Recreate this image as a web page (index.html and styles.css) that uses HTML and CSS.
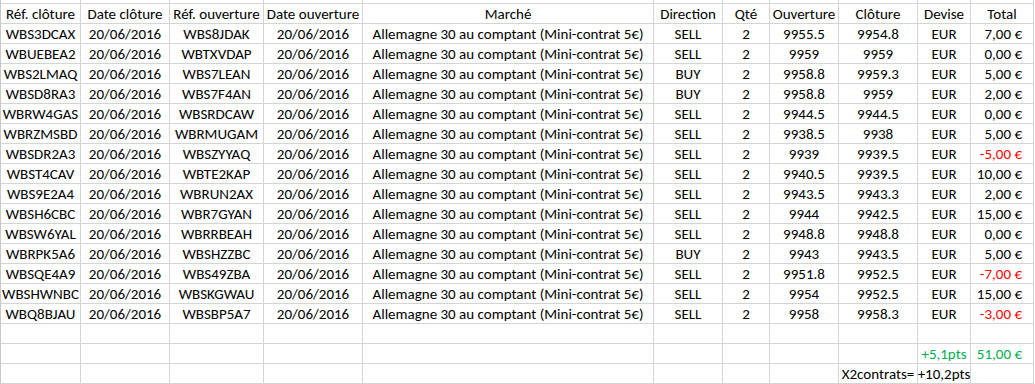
FILE: index.html
```html
<!DOCTYPE html>
<html lang="fr">
<head>
<meta charset="utf-8">
<title>Transactions</title>
<link rel="stylesheet" href="styles.css">
</head>
<body>
<div class="sheet">
  <div class="c"></div><div class="c"></div><div class="c"></div><div class="c"></div><div class="c"></div><div class="c"></div><div class="c"></div><div class="c"></div><div class="c"></div><div class="c"></div><div class="c"></div>

  <div class="c">Réf. clôture</div><div class="c">Date clôture</div><div class="c">Réf. ouverture</div><div class="c">Date ouverture</div><div class="c">Marché</div><div class="c">Direction</div><div class="c">Qté</div><div class="c">Ouverture</div><div class="c">Clôture</div><div class="c">Devise</div><div class="c">Total</div>

  <div class="c">WBS3DCAX</div><div class="c">20/06/2016</div><div class="c">WBS8JDAK</div><div class="c">20/06/2016</div><div class="c">Allemagne 30 au comptant (Mini-contrat 5€)</div><div class="c">SELL</div><div class="c">2</div><div class="c">9955.5</div><div class="c">9954.8</div><div class="c">EUR</div><div class="c r">7,00 €</div>
  <div class="c">WBUEBEA2</div><div class="c">20/06/2016</div><div class="c">WBTXVDAP</div><div class="c">20/06/2016</div><div class="c">Allemagne 30 au comptant (Mini-contrat 5€)</div><div class="c">SELL</div><div class="c">2</div><div class="c">9959</div><div class="c">9959</div><div class="c">EUR</div><div class="c r">0,00 €</div>
  <div class="c">WBS2LMAQ</div><div class="c">20/06/2016</div><div class="c">WBS7LEAN</div><div class="c">20/06/2016</div><div class="c">Allemagne 30 au comptant (Mini-contrat 5€)</div><div class="c">BUY</div><div class="c">2</div><div class="c">9958.8</div><div class="c">9959.3</div><div class="c">EUR</div><div class="c r">5,00 €</div>
  <div class="c">WBSD8RA3</div><div class="c">20/06/2016</div><div class="c">WBS7F4AN</div><div class="c">20/06/2016</div><div class="c">Allemagne 30 au comptant (Mini-contrat 5€)</div><div class="c">BUY</div><div class="c">2</div><div class="c">9958.8</div><div class="c">9959</div><div class="c">EUR</div><div class="c r">2,00 €</div>
  <div class="c">WBRW4GAS</div><div class="c">20/06/2016</div><div class="c">WBSRDCAW</div><div class="c">20/06/2016</div><div class="c">Allemagne 30 au comptant (Mini-contrat 5€)</div><div class="c">SELL</div><div class="c">2</div><div class="c">9944.5</div><div class="c">9944.5</div><div class="c">EUR</div><div class="c r">0,00 €</div>
  <div class="c">WBRZMSBD</div><div class="c">20/06/2016</div><div class="c">WBRMUGAM</div><div class="c">20/06/2016</div><div class="c">Allemagne 30 au comptant (Mini-contrat 5€)</div><div class="c">SELL</div><div class="c">2</div><div class="c">9938.5</div><div class="c">9938</div><div class="c">EUR</div><div class="c r">5,00 €</div>
  <div class="c">WBSDR2A3</div><div class="c">20/06/2016</div><div class="c">WBSZYYAQ</div><div class="c">20/06/2016</div><div class="c">Allemagne 30 au comptant (Mini-contrat 5€)</div><div class="c">SELL</div><div class="c">2</div><div class="c">9939</div><div class="c">9939.5</div><div class="c">EUR</div><div class="c r neg">-5,00 €</div>
  <div class="c">WBST4CAV</div><div class="c">20/06/2016</div><div class="c">WBTE2KAP</div><div class="c">20/06/2016</div><div class="c">Allemagne 30 au comptant (Mini-contrat 5€)</div><div class="c">SELL</div><div class="c">2</div><div class="c">9940.5</div><div class="c">9939.5</div><div class="c">EUR</div><div class="c r">10,00 €</div>
  <div class="c">WBS9E2A4</div><div class="c">20/06/2016</div><div class="c">WBRUN2AX</div><div class="c">20/06/2016</div><div class="c">Allemagne 30 au comptant (Mini-contrat 5€)</div><div class="c">SELL</div><div class="c">2</div><div class="c">9943.5</div><div class="c">9943.3</div><div class="c">EUR</div><div class="c r">2,00 €</div>
  <div class="c">WBSH6CBC</div><div class="c">20/06/2016</div><div class="c">WBR7GYAN</div><div class="c">20/06/2016</div><div class="c">Allemagne 30 au comptant (Mini-contrat 5€)</div><div class="c">SELL</div><div class="c">2</div><div class="c">9944</div><div class="c">9942.5</div><div class="c">EUR</div><div class="c r">15,00 €</div>
  <div class="c">WBSW6YAL</div><div class="c">20/06/2016</div><div class="c">WBRRBEAH</div><div class="c">20/06/2016</div><div class="c">Allemagne 30 au comptant (Mini-contrat 5€)</div><div class="c">SELL</div><div class="c">2</div><div class="c">9948.8</div><div class="c">9948.8</div><div class="c">EUR</div><div class="c r">0,00 €</div>
  <div class="c">WBRPK5A6</div><div class="c">20/06/2016</div><div class="c">WBSHZZBC</div><div class="c">20/06/2016</div><div class="c">Allemagne 30 au comptant (Mini-contrat 5€)</div><div class="c">BUY</div><div class="c">2</div><div class="c">9943</div><div class="c">9943.5</div><div class="c">EUR</div><div class="c r">5,00 €</div>
  <div class="c">WBSQE4A9</div><div class="c">20/06/2016</div><div class="c">WBS49ZBA</div><div class="c">20/06/2016</div><div class="c">Allemagne 30 au comptant (Mini-contrat 5€)</div><div class="c">SELL</div><div class="c">2</div><div class="c">9951.8</div><div class="c">9952.5</div><div class="c">EUR</div><div class="c r neg">-7,00 €</div>
  <div class="c">WBSHWNBC</div><div class="c">20/06/2016</div><div class="c">WBSKGWAU</div><div class="c">20/06/2016</div><div class="c">Allemagne 30 au comptant (Mini-contrat 5€)</div><div class="c">SELL</div><div class="c">2</div><div class="c">9954</div><div class="c">9952.5</div><div class="c">EUR</div><div class="c r">15,00 €</div>
  <div class="c">WBQ8BJAU</div><div class="c">20/06/2016</div><div class="c">WBSBP5A7</div><div class="c">20/06/2016</div><div class="c">Allemagne 30 au comptant (Mini-contrat 5€)</div><div class="c">SELL</div><div class="c">2</div><div class="c">9958</div><div class="c">9958.3</div><div class="c">EUR</div><div class="c r neg">-3,00 €</div>

  <div class="c"></div><div class="c"></div><div class="c"></div><div class="c"></div><div class="c"></div><div class="c"></div><div class="c"></div><div class="c"></div><div class="c"></div><div class="c"></div><div class="c"></div>

  <div class="c"></div><div class="c"></div><div class="c"></div><div class="c"></div><div class="c"></div><div class="c"></div><div class="c"></div><div class="c"></div><div class="c"></div><div class="c pos">+5,1pts</div><div class="c r pos">51,00 €</div>

  <div class="c"></div><div class="c"></div><div class="c"></div><div class="c"></div><div class="c"></div><div class="c"></div><div class="c"></div><div class="c"></div><div class="c">X2contrats=</div><div class="c">+10,2pts</div><div class="c"></div>
</div>
</body>
</html>
```

FILE: styles.css
```css
html, body {
  margin: 0;
  padding: 0;
  background: #ffffff;
}

.sheet {
  display: grid;
  grid-template-columns: 80px 89px 94px 99px 291px 69px 47px 69px 79px 53px 63px;
  grid-template-rows: 4px;
  grid-auto-rows: 20px;
  width: max-content;
  border-left: 1px solid #c8c8c8;
  font-family: Carlito, Lato, "Open Sans", sans-serif;
  font-size: 15px;
  color: #000000;
}

.c {
  box-sizing: border-box;
  border-right: 1px solid #d4d4d4;
  border-bottom: 1px solid #d4d4d4;
  display: flex;
  align-items: center;
  justify-content: center;
  white-space: nowrap;
  overflow: visible;
  line-height: 19px;
  padding-top: 1px;
}

.r {
  justify-content: flex-end;
  padding-right: 11px;
}

.neg {
  color: #ff0000;
}

.pos {
  color: #00b050;
}
```
